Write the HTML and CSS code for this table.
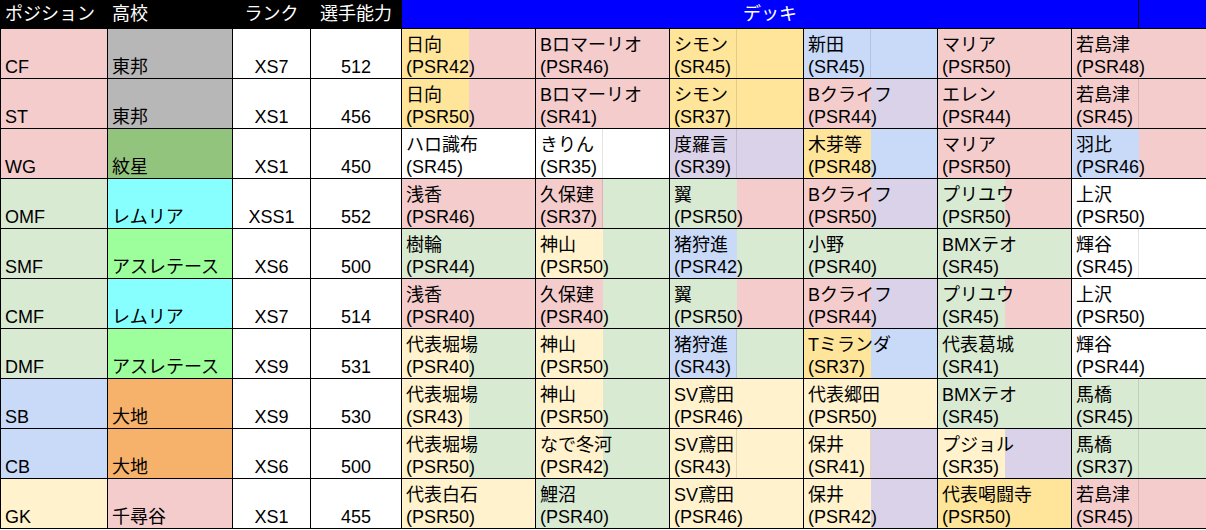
FILE: index.html
```html
<!DOCTYPE html>
<html lang="ja">
<head>
<meta charset="utf-8">
<title>デッキ</title>
<link rel="stylesheet" href="styles.css">
</head>
<body>
<div class="sheet">
  <div class="h">ポジション</div>
  <div class="h">高校</div>
  <div class="h c">ランク</div>
  <div class="h c">選手能力</div>
  <div class="hdeck"><div class="hdeck-main">デッキ</div><div class="hdeck-end"></div></div>

  <div class="cell bg-pink">CF</div>
  <div class="cell bg-gray">東邦</div>
  <div class="cell num">XS7</div>
  <div class="cell num">512</div>
  <div class="cell deck l-gold r-pink"><span>日向</span><span>(PSR42)</span></div>
  <div class="cell deck l-pink r-pink"><span>Bロマーリオ</span><span>(PSR46)</span></div>
  <div class="cell deck l-gold r-gold g"><span>シモン</span><span>(SR45)</span></div>
  <div class="cell deck l-blue r-blue g"><span>新田</span><span>(SR45)</span></div>
  <div class="cell deck l-pink r-pink"><span>マリア</span><span>(PSR50)</span></div>
  <div class="cell deck l-pink r-pink"><span>若島津</span><span>(PSR48)</span></div>

  <div class="cell bg-pink">ST</div>
  <div class="cell bg-gray">東邦</div>
  <div class="cell num">XS1</div>
  <div class="cell num">456</div>
  <div class="cell deck l-gold r-pink"><span>日向</span><span>(PSR50)</span></div>
  <div class="cell deck l-pink r-pink"><span>Bロマーリオ</span><span>(SR41)</span></div>
  <div class="cell deck l-gold r-gold g"><span>シモン</span><span>(SR37)</span></div>
  <div class="cell deck l-pink r-lav"><span>Bクライフ</span><span>(PSR44)</span></div>
  <div class="cell deck l-pink r-pink"><span>エレン</span><span>(PSR44)</span></div>
  <div class="cell deck l-pink r-pink g"><span>若島津</span><span>(SR45)</span></div>

  <div class="cell bg-pink">WG</div>
  <div class="cell bg-dgreen">紋星</div>
  <div class="cell num">XS1</div>
  <div class="cell num">450</div>
  <div class="cell deck l-white r-white"><span>ハロ識布</span><span>(SR45)</span></div>
  <div class="cell deck l-white r-white g"><span>きりん</span><span>(SR35)</span></div>
  <div class="cell deck l-lav r-lav g"><span>度羅言</span><span>(SR39)</span></div>
  <div class="cell deck l-gold r-blue"><span>木芽等</span><span>(PSR48)</span></div>
  <div class="cell deck l-pink r-pink"><span>マリア</span><span>(PSR50)</span></div>
  <div class="cell deck l-blue r-pink"><span>羽比</span><span>(PSR46)</span></div>

  <div class="cell bg-green">OMF</div>
  <div class="cell bg-cyan">レムリア</div>
  <div class="cell num">XSS1</div>
  <div class="cell num">552</div>
  <div class="cell deck l-pink r-pink"><span>浅香</span><span>(PSR46)</span></div>
  <div class="cell deck l-pink r-green g"><span>久保建</span><span>(SR37)</span></div>
  <div class="cell deck l-green r-pink"><span>翼</span><span>(PSR50)</span></div>
  <div class="cell deck l-pink r-lav"><span>Bクライフ</span><span>(PSR50)</span></div>
  <div class="cell deck l-green r-pink"><span>プリユウ</span><span>(PSR50)</span></div>
  <div class="cell deck l-white r-white"><span>上沢</span><span>(PSR50)</span></div>

  <div class="cell bg-green">SMF</div>
  <div class="cell bg-lgreen">アスレテース</div>
  <div class="cell num">XS6</div>
  <div class="cell num">500</div>
  <div class="cell deck l-green r-green"><span>樹輪</span><span>(PSR44)</span></div>
  <div class="cell deck l-cream r-green"><span>神山</span><span>(PSR50)</span></div>
  <div class="cell deck l-blue r-green"><span>猪狩進</span><span>(PSR42)</span></div>
  <div class="cell deck l-green r-green"><span>小野</span><span>(PSR40)</span></div>
  <div class="cell deck l-green r-green"><span>BMXテオ</span><span>(SR45)</span></div>
  <div class="cell deck l-white r-white g"><span>輝谷</span><span>(SR45)</span></div>

  <div class="cell bg-green">CMF</div>
  <div class="cell bg-cyan">レムリア</div>
  <div class="cell num">XS7</div>
  <div class="cell num">514</div>
  <div class="cell deck l-pink r-pink"><span>浅香</span><span>(PSR40)</span></div>
  <div class="cell deck l-pink r-green"><span>久保建</span><span>(PSR40)</span></div>
  <div class="cell deck l-green r-pink"><span>翼</span><span>(PSR50)</span></div>
  <div class="cell deck l-pink r-lav"><span>Bクライフ</span><span>(PSR44)</span></div>
  <div class="cell deck l-green r-pink"><span>プリユウ</span><span>(SR45)</span></div>
  <div class="cell deck l-white r-white"><span>上沢</span><span>(PSR50)</span></div>

  <div class="cell bg-green">DMF</div>
  <div class="cell bg-lgreen">アスレテース</div>
  <div class="cell num">XS9</div>
  <div class="cell num">531</div>
  <div class="cell deck l-cream r-green"><span>代表堀場</span><span>(PSR40)</span></div>
  <div class="cell deck l-cream r-green"><span>神山</span><span>(PSR50)</span></div>
  <div class="cell deck l-blue r-green g"><span>猪狩進</span><span>(SR43)</span></div>
  <div class="cell deck l-gold r-blue"><span>Tミランダ</span><span>(SR37)</span></div>
  <div class="cell deck l-green r-green"><span>代表葛城</span><span>(SR41)</span></div>
  <div class="cell deck l-white r-white"><span>輝谷</span><span>(PSR44)</span></div>

  <div class="cell bg-blue">SB</div>
  <div class="cell bg-orange">大地</div>
  <div class="cell num">XS9</div>
  <div class="cell num">530</div>
  <div class="cell deck l-cream r-green"><span>代表堀場</span><span>(SR43)</span></div>
  <div class="cell deck l-cream r-green"><span>神山</span><span>(PSR50)</span></div>
  <div class="cell deck l-cream r-cream"><span>SV鳶田</span><span>(PSR46)</span></div>
  <div class="cell deck l-cream r-cream"><span>代表郷田</span><span>(PSR50)</span></div>
  <div class="cell deck l-green r-green"><span>BMXテオ</span><span>(SR45)</span></div>
  <div class="cell deck l-green r-green g"><span>馬橋</span><span>(SR45)</span></div>

  <div class="cell bg-blue">CB</div>
  <div class="cell bg-orange">大地</div>
  <div class="cell num">XS6</div>
  <div class="cell num">500</div>
  <div class="cell deck l-cream r-green"><span>代表堀場</span><span>(PSR50)</span></div>
  <div class="cell deck l-cream r-green"><span>なで冬河</span><span>(PSR42)</span></div>
  <div class="cell deck l-cream r-cream g"><span>SV鳶田</span><span>(SR43)</span></div>
  <div class="cell deck l-cream r-lav g"><span>保井</span><span>(SR41)</span></div>
  <div class="cell deck l-cream r-lav"><span>プジョル</span><span>(SR35)</span></div>
  <div class="cell deck l-green r-green g"><span>馬橋</span><span>(SR37)</span></div>

  <div class="cell bg-cream">GK</div>
  <div class="cell bg-pink">千尋谷</div>
  <div class="cell num">XS1</div>
  <div class="cell num">455</div>
  <div class="cell deck l-cream r-cream"><span>代表白石</span><span>(PSR50)</span></div>
  <div class="cell deck l-green r-green"><span>鯉沼</span><span>(PSR40)</span></div>
  <div class="cell deck l-cream r-cream"><span>SV鳶田</span><span>(PSR46)</span></div>
  <div class="cell deck l-cream r-lav"><span>保井</span><span>(PSR42)</span></div>
  <div class="cell deck l-gold r-gold"><span>代表喝闘寺</span><span>(PSR50)</span></div>
  <div class="cell deck l-pink r-pink g"><span>若島津</span><span>(SR45)</span></div>
</div>
</body>
</html>
```

FILE: styles.css
```css
html, body {
  margin: 0;
  padding: 0;
  background: #fff;
}

.sheet {
  display: grid;
  grid-template-columns: 106px 124px 77px 90px repeat(5, 133px) 134px;
  grid-template-rows: 28px repeat(10, 49px);
  gap: 1px;
  padding: 0 0 1px 1px;
  width: max-content;
  background: #000;
  font-family: "Liberation Sans", "Noto Sans CJK JP", sans-serif;
  font-size: 18px;
  line-height: 22px;
  color: #000;
}

.h {
  display: flex;
  align-items: center;
  padding: 0 4px;
  background: #000;
  color: #fff;
  white-space: nowrap;
}

.h.c {
  justify-content: center;
}

.hdeck {
  grid-column: span 6;
  display: flex;
  background: #0000ff;
  color: #fff;
}

.hdeck-main {
  flex: 1;
  display: flex;
  align-items: center;
  justify-content: center;
}

.hdeck-end {
  width: 67px;
  border-left: 1px solid #000;
}

.cell {
  display: flex;
  flex-direction: column;
  justify-content: flex-end;
  align-items: flex-start;
  padding: 0 4px;
  white-space: nowrap;
  background: #fff;
  min-width: 0;
}

.num {
  align-items: center;
}

.bg-pink { background: #f4cccc; }
.bg-gray { background: #b7b7b7; }
.bg-dgreen { background: #93c47d; }
.bg-green { background: #d9ead3; }
.bg-cyan { background: #88ffff; }
.bg-lgreen { background: #9cff9c; }
.bg-blue { background: #c9daf8; }
.bg-orange { background: #f6b26b; }
.bg-cream { background: #fff2cc; }

.deck {
  --l: #fff;
  --r: #fff;
  background:
    linear-gradient(to right, transparent 66px, var(--m, transparent) 66px 67px, transparent 67px),
    linear-gradient(to right, var(--l) 67px, var(--r) 67px);
}

.deck.g {
  --m: rgba(0, 0, 0, 0.11);
}

.l-pink { --l: #f4cccc; }
.l-gold { --l: #ffe599; }
.l-blue { --l: #c9daf8; }
.l-lav { --l: #d9d2e9; }
.l-green { --l: #d9ead3; }
.l-cream { --l: #fff2cc; }
.l-white { --l: #ffffff; }

.r-pink { --r: #f4cccc; }
.r-gold { --r: #ffe599; }
.r-blue { --r: #c9daf8; }
.r-lav { --r: #d9d2e9; }
.r-green { --r: #d9ead3; }
.r-cream { --r: #fff2cc; }
.r-white { --r: #ffffff; }
```
